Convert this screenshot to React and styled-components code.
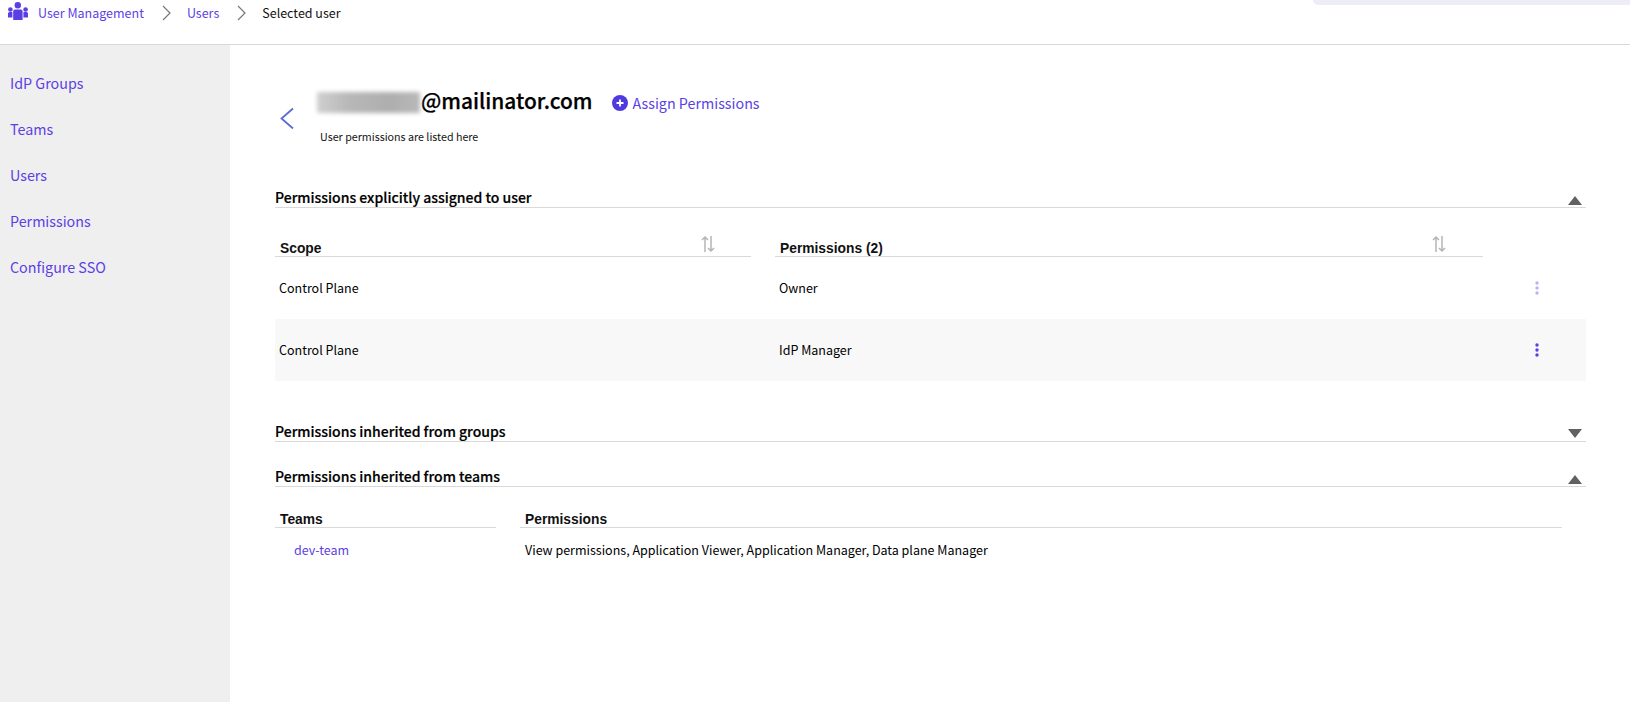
import React from 'react';
import styled, { createGlobalStyle } from 'styled-components';

const accent = '#5b3fe4';
const rule = '#d9d9d9';
const sans = '"Noto Sans CJK SC", "Noto Sans", sans-serif';

const GlobalStyle = createGlobalStyle`
  html, body {
    margin: 0;
    padding: 0;
    background: #fff;
  }
  body {
    font-family: ${sans};
    color: #000;
  }
`;

const Page = styled.div`
  width: 1630px;
  height: 702px;
  display: flex;
  flex-direction: column;
  overflow: hidden;
`;

const Header = styled.header`
  height: 45px;
  flex: none;
  box-sizing: border-box;
  border-bottom: 1px solid ${rule};
  display: flex;
  justify-content: space-between;
  align-items: flex-start;
`;

const Breadcrumbs = styled.nav`
  display: flex;
  align-items: center;
  height: 25px;
  padding-left: 8px;
  font-size: 12.5px;
  line-height: 25px;
`;

const CrumbIcon = styled.svg`
  width: 20px;
  height: 18px;
  fill: ${accent};
  margin: -3px 10px 0 0;
`;

const CrumbLink = styled.a`
  color: ${accent};
`;

const CrumbCurrent = styled.span`
  color: #111;
`;

const CrumbSeparator = styled.svg`
  width: 10px;
  height: 16px;
  margin: 0 15px 0 18px;
  fill: none;
  stroke: #777;
  stroke-width: 1.2;
`;

const SearchEdge = styled.div`
  width: 317px;
  height: 5px;
  background: #ecedf6;
  border-bottom-left-radius: 8px;
`;

const Body = styled.div`
  flex: 1;
  display: flex;
  min-height: 0;
`;

const Sidebar = styled.aside`
  width: 230px;
  flex: none;
  background: #efefef;
  box-sizing: border-box;
  padding: 26px 0 0 10px;
  display: flex;
  flex-direction: column;
  gap: 22px;
`;

const SideLink = styled.a`
  color: ${accent};
  font-size: 14.3px;
  line-height: 24px;
`;

const Main = styled.main`
  flex: 1;
  padding: 0 44px 0 45px;
`;

const TitleBlock = styled.div`
  display: flex;
  align-items: flex-start;
  height: 75px;
  padding-top: 43px;
`;

const BackButton = styled.svg`
  width: 14px;
  height: 22px;
  margin: 19px 0 0 5px;
  fill: none;
  stroke: #5a6ad6;
  stroke-width: 1.8;
  flex: none;
`;

const TitleColumn = styled.div`
  margin-left: 24px;
`;

const TitleRow = styled.div`
  display: flex;
  align-items: center;
  height: 28px;
  margin-top: -2px;
`;

const Redacted = styled.div`
  width: 103px;
  height: 21px;
  margin: 4px 0 0 -1px;
  background: linear-gradient(90deg, #cfcfcf, #b8b8b8 30%, #aeaeae 70%, #b8b8b8);
  filter: blur(2px);
`;

const Email = styled.h1`
  margin: 0 0 0 1px;
  font-size: 20.9px;
  line-height: 28px;
  font-weight: 500;
  color: #000;
  -webkit-text-stroke: 0.25px #000;
`;

const AssignLink = styled.a`
  display: flex;
  align-items: center;
  gap: 4px;
  margin: 6px 0 0 20px;
  color: ${accent};
  font-size: 14.3px;
  line-height: 24px;
`;

const PlusIcon = styled.svg`
  width: 16px;
  height: 16px;
`;

const Subtitle = styled.p`
  margin: 15px 0 0 2px;
  font-size: 10.7px;
  line-height: 16px;
  color: #111;
`;

const SectionHeader = styled.div`
  display: flex;
  justify-content: space-between;
  align-items: flex-end;
  height: 33px;
  box-sizing: border-box;
  border-bottom: 1px solid ${rule};
  margin-top: ${p => p.$top}px;
`;

const SectionTitle = styled.h2`
  margin: 0;
  font-size: 14px;
  line-height: 19px;
  font-weight: 500;
  color: #000;
  -webkit-text-stroke: 0.2px #000;
`;

const Caret = styled.span`
  width: 0;
  height: 0;
  margin: 0 4px ${p => (p.$open ? 2 : 3)}px 0;
  border-left: 7px solid transparent;
  border-right: 7px solid transparent;
  border-bottom: ${p => (p.$open ? '9px solid #616161' : 'none')};
  border-top: ${p => (p.$open ? 'none' : '9px solid #616161')};
`;

const ColumnHeaders = styled.div`
  display: grid;
  grid-template-columns: ${p => p.$columns};
  column-gap: 24px;
  margin-top: ${p => p.$top}px;
`;

const ColumnHeader = styled.div`
  display: flex;
  justify-content: space-between;
  align-items: flex-end;
  box-sizing: border-box;
  border-bottom: 1px solid ${rule};
  height: ${p => p.$height}px;
  padding-left: 5px;
  font-family: "Liberation Sans", Arial, sans-serif;
  font-size: 13.8px;
  line-height: 15px;
  font-weight: 700;
  color: #111;
`;

const SortIcon = styled.svg`
  width: 16px;
  height: 18px;
  margin: 0 ${p => p.$right}px 3px 0;
  fill: none;
  stroke: #b5b5b5;
  stroke-width: 1.5;
`;

const Row = styled.div`
  display: grid;
  grid-template-columns: 500px 1fr 20px;
  align-items: center;
  height: 62px;
  padding-right: 39px;
  background: ${p => (p.$shaded ? '#f8f8f8' : 'transparent')};
  font-size: 12.5px;
  line-height: 20px;
  color: #000;
`;

const Cell = styled.div`
  padding-left: ${p => p.$indent}px;
`;

const DotsIcon = styled.svg`
  width: 4px;
  height: 14px;
  justify-self: center;
  fill: ${accent};
  opacity: ${p => (p.$faded ? 0.4 : 1)};
`;

const TeamRow = styled.div`
  display: grid;
  grid-template-columns: 221px 1fr;
  column-gap: 24px;
  margin-top: 12px;
  font-size: 12.5px;
  line-height: 20px;
  color: #000;
`;

const TeamLink = styled.a`
  color: ${accent};
  padding-left: 19px;
`;

const TeamPermissions = styled.div`
  padding-left: 5px;
`;

const Chevron = () => (
  <CrumbSeparator viewBox="0 0 10 16">
    <path d="M1 1l7 7-7 7" />
  </CrumbSeparator>
);

const SortArrows = ({ right }) => (
  <SortIcon $right={right} viewBox="0 0 16 18">
    <path d="M5 17V2M2 5l3-3 3 3" />
    <path d="M11 1v15M8 13l3 3 3-3" />
  </SortIcon>
);

const Dots = ({ faded }) => (
  <DotsIcon $faded={faded} viewBox="0 0 4 14">
    <circle cx="2" cy="2" r="1.7" />
    <circle cx="2" cy="7" r="1.7" />
    <circle cx="2" cy="12" r="1.7" />
  </DotsIcon>
);

const sideLinks = ['IdP Groups', 'Teams', 'Users', 'Permissions', 'Configure SSO'];

const assigned = [
  { scope: 'Control Plane', permission: 'Owner' },
  { scope: 'Control Plane', permission: 'IdP Manager' },
];

export default function App() {
  return (
    <Page>
      <GlobalStyle />
      <Header>
        <Breadcrumbs>
          <CrumbIcon viewBox="0 0 20 18">
            <circle cx="9.8" cy="3.3" r="3.2" />
            <circle cx="2.4" cy="7.500" r="2.3" />
            <circle cx="17.6" cy="7.500" r="2.3" />
            <path d="M7 7.500h5.600q2 0 2 2V18H5.200V9.500q0-2 1.800-2z" />
            <path d="M0 11.500q0-1.500 1.500-1.500h2.900v5.500H0zM15.400 10h3.100q1.500 0 1.500 1.500v4h-4.600z" />
          </CrumbIcon>
          <CrumbLink>User Management</CrumbLink>
          <Chevron />
          <CrumbLink>Users</CrumbLink>
          <Chevron />
          <CrumbCurrent>Selected user</CrumbCurrent>
        </Breadcrumbs>
        <SearchEdge />
      </Header>
      <Body>
        <Sidebar>
          {sideLinks.map(link => (
            <SideLink key={link}>{link}</SideLink>
          ))}
        </Sidebar>
        <Main>
          <TitleBlock>
            <BackButton viewBox="0 0 14 22">
              <path d="M13 1.500L1.500 11.500 13 21.500" />
            </BackButton>
            <TitleColumn>
              <TitleRow>
                <Redacted />
                <Email>@mailinator.com</Email>
                <AssignLink>
                  <PlusIcon viewBox="0 0 16 16">
                    <circle cx="8" cy="8" r="8" fill="#4f3ae0" />
                    <path d="M8 4.500v7M4.500 8h7" stroke="#fff" strokeWidth="1.800" />
                  </PlusIcon>
                  Assign Permissions
                </AssignLink>
              </TitleRow>
              <Subtitle>User permissions are listed here</Subtitle>
            </TitleColumn>
          </TitleBlock>

          <SectionHeader $top={12}>
            <SectionTitle>Permissions explicitly assigned to user</SectionTitle>
            <Caret $open />
          </SectionHeader>
          <ColumnHeaders $top={12} $columns="476px 708px">
            <ColumnHeader $height={37}>
              Scope
              <SortArrows right={35} />
            </ColumnHeader>
            <ColumnHeader $height={37}>
              Permissions (2)
              <SortArrows right={36} />
            </ColumnHeader>
          </ColumnHeaders>
          {assigned.map((row, i) => (
            <Row key={row.permission} $shaded={i === 1}>
              <Cell $indent={4}>{row.scope}</Cell>
              <Cell $indent={4}>{row.permission}</Cell>
              <Dots faded={i === 0} />
            </Row>
          ))}

          <SectionHeader $top={28}>
            <SectionTitle>Permissions inherited from groups</SectionTitle>
            <Caret />
          </SectionHeader>
          <SectionHeader $top={12}>
            <SectionTitle>Permissions inherited from teams</SectionTitle>
            <Caret $open />
          </SectionHeader>
          <ColumnHeaders $top={10} $columns="221px 1042px">
            <ColumnHeader $height={31}>Teams</ColumnHeader>
            <ColumnHeader $height={31}>Permissions</ColumnHeader>
          </ColumnHeaders>
          <TeamRow>
            <TeamLink>dev-team</TeamLink>
            <TeamPermissions>View permissions, Application Viewer, Application Manager, Data plane Manager</TeamPermissions>
          </TeamRow>
        </Main>
      </Body>
    </Page>
  );
}
